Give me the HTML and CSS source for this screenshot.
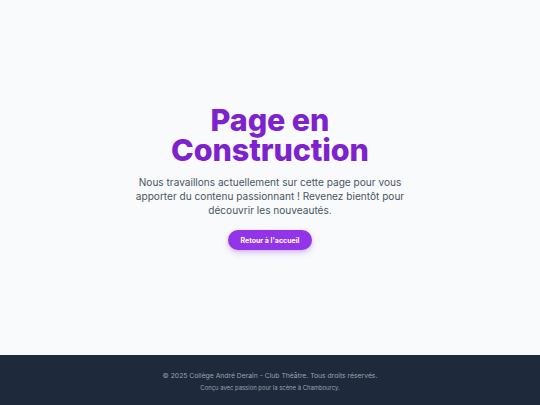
FILE: index.html
```html
<!DOCTYPE html>
<html lang="fr">
<head>
<meta charset="utf-8">
<link rel="stylesheet" href="styles.css">
</head>
<body>
<main class="main">
  <div class="content">
    <h1 class="title"><span class="tl">Page en</span><span class="tl">Construction</span></h1>
    <p class="text">Nous travaillons actuellement sur cette page pour vous apporter du contenu passionnant ! Revenez bientôt pour découvrir les nouveautés.</p>
    <a class="btn" href="#">Retour à l'accueil</a>
  </div>
</main>
<footer class="footer">
  <p class="f1">© 2025 Collège André Derain - Club Théâtre. Tous droits réservés.</p>
  <p class="f2">Conçu avec passion pour la scène à Chambourcy.</p>
</footer>
</body>
</html>
```
FILE: styles.css
```css
html, body { margin: 0; padding: 0; }
body {
  font-family: Inter, "Noto Sans", sans-serif;
  background: #f8fafc;
  height: 405px;
  display: flex;
  flex-direction: column;
}
.main {
  height: 355px;
  display: flex;
  align-items: center;
  justify-content: center;
}
.content {
  display: flex;
  flex-direction: column;
  align-items: center;
  text-align: center;
  width: 290px;
}
.title {
  margin: 0;
  font-size: 30.5px;
  font-weight: 800;
  color: #7e22ce;
  letter-spacing: -0.1px;
  display: flex;
  flex-direction: column;
}
.tl {
  display: block;
  line-height: 30px;
}
.text {
  margin: 10px 0 0;
  font-size: 10.1px;
  line-height: 14px;
  color: #4b5563;
}
.btn {
  margin-top: 13px;
  display: inline-flex;
  align-items: center;
  justify-content: center;
  width: 84px;
  height: 20px;
  border-radius: 10px;
  background: #9333ea;
  color: #fff;
  font-size: 7px;
  font-weight: 700;
  text-decoration: none;
  box-shadow: 0 3px 6px rgba(147, 51, 234, 0.25), 0 1px 3px rgba(0,0,0,0.12);
}
.footer {
  height: 50px;
  background: #1e293b;
  display: flex;
  flex-direction: column;
  align-items: center;
  justify-content: center;
  padding-top: 2px;
  box-sizing: border-box;
}
.f1 {
  margin: 0;
  font-size: 6.8px;
  color: #9ca3af;
  line-height: 9px;
}
.f2 {
  margin: 4px 0 0;
  font-size: 5.9px;
  color: #9ca3af;
  line-height: 8px;
}
```
